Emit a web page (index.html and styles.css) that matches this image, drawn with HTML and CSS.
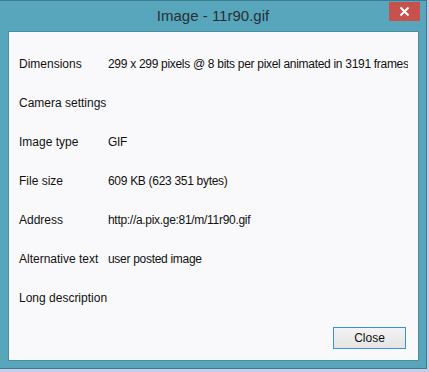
FILE: index.html
```html
<!DOCTYPE html>
<html lang="en">
<head>
    <meta charset="UTF-8">
    <title>Image - 11r90.gif</title>
    <link rel="stylesheet" href="styles.css">
</head>
<body>
    <div class="window">
        <div class="titlebar">
            <span></span>
            <span class="title">Image - 11r90.gif</span>
            <span class="close-x">
                <svg width="11" height="11" viewBox="0 0 11 11">
                    <path d="M1.5 1.5 L9.5 9.5 M9.5 1.5 L1.5 9.5" stroke="#fff" stroke-width="2" fill="none"/>
                </svg>
            </span>
        </div>
        <div class="client">
            <div class="props">
                <span class="label">Dimensions</span>
                <span class="value">299 x 299 pixels @ 8 bits per pixel animated in 3191 frames</span>
                <span class="label">Camera settings</span>
                <span class="value"></span>
                <span class="label">Image type</span>
                <span class="value">GIF</span>
                <span class="label">File size</span>
                <span class="value">609 KB (623 351 bytes)</span>
                <span class="label">Address</span>
                <span class="value">http://a.pix.ge:81/m/11r90.gif</span>
                <span class="label">Alternative text</span>
                <span class="value">user posted image</span>
                <span class="label">Long description</span>
                <span class="value"></span>
            </div>
            <div class="buttons">
                <button class="btn">Close</button>
            </div>
        </div>
    </div>
</body>
</html>
```

FILE: styles.css
```css
body {
    margin: 0;
    background: #c9cde9;
    font-family: "Liberation Sans", Arial, sans-serif;
}
.window {
    width: 426px;
    height: 368px;
    background: #58a6bc;
    border-top: 1px solid #3b7d90;
    border-right: 1px solid #3b7d90;
    border-bottom: 1px solid #3b7d90;
    box-sizing: border-box;
    width: 427px;
    height: 369px;
    display: flex;
    flex-direction: column;
}
.titlebar {
    height: 30px;
    display: grid;
    grid-template-columns: 1fr auto 1fr;
    align-items: start;
}
.title {
    font-size: 15px;
    color: #2a2f33;
    line-height: 30px;
}
.close-x {
    justify-self: end;
    margin: 1px 6px 0 0;
    width: 31px;
    height: 19px;
    background: #c7514c;
    display: flex;
    align-items: center;
    justify-content: center;
}
.client {
    margin: 0 7px 7px 8px;
    flex: 1;
    background: #f9f9fb;
    border: 1px solid #4a8ea1;
    display: flex;
    flex-direction: column;
}
.props {
    display: grid;
    grid-template-columns: 89px 1fr;
    grid-auto-rows: 39px;
    align-items: center;
    padding: 12px 10px 0 10px;
    font-size: 12px;
    color: #111;
}
.value {
    white-space: nowrap;
    overflow: hidden;
    letter-spacing: -0.3px;
}
.buttons {
    margin-top: auto;
    display: flex;
    justify-content: flex-end;
    padding: 0 12px 11px 0;
}
.btn {
    width: 73px;
    height: 22px;
    border: 1px solid #3c8fe6;
    background: linear-gradient(#f3f3f3, #e4e4e4);
    font-family: "Liberation Sans", Arial, sans-serif;
    font-size: 12px;
    color: #111;
    padding: 0;
}
```
